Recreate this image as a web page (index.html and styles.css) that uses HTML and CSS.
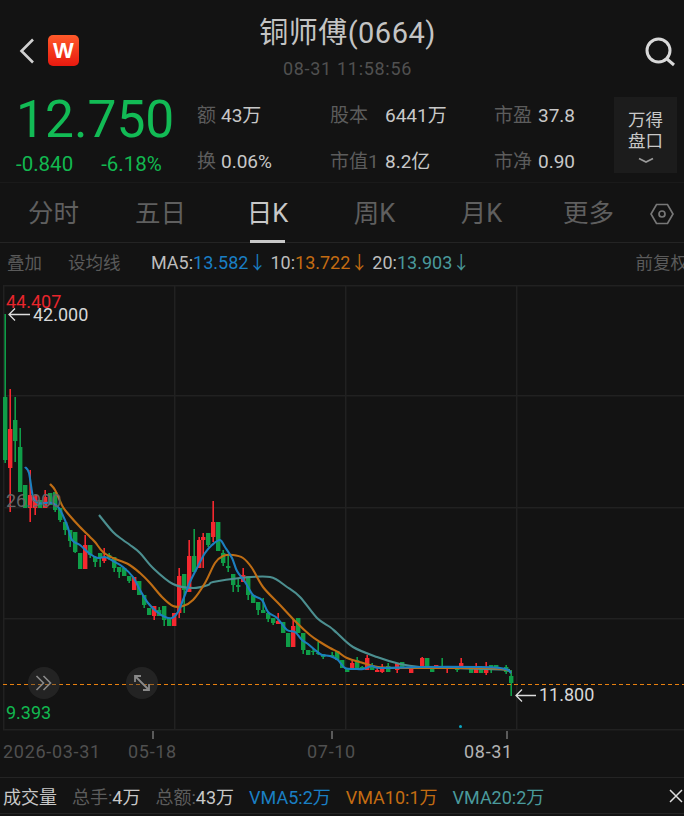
FILE: index.html
```html
<!DOCTYPE html>
<html lang="zh">
<head>
    <meta charset="UTF-8">
    <meta name="viewport" content="width=device-width, initial-scale=1.0">
    <title>铜师傅(0664)</title>
    <link rel="stylesheet" href="styles.css">
</head>
<body>
    <header class="topbar">
        <div class="topbar-left">
            <svg class="back-icon" width="16" height="26" viewBox="0 0 16 26"><path d="M14 1.5 2.5 13 14 24.5" fill="none" stroke="#d0d0d0" stroke-width="2.6"/></svg>
            <span class="logo">W</span>
        </div>
        <div class="title-block">
            <div class="title">铜师傅(0664)</div>
            <div class="time">08-31 11:58:56</div>
        </div>
        <div class="topbar-right">
            <svg width="32" height="30" viewBox="0 0 32 30"><circle cx="14.5" cy="13.5" r="11.5" fill="none" stroke="#d8d8d8" stroke-width="3"/><path d="M23 22l7 6" fill="none" stroke="#d8d8d8" stroke-width="3"/></svg>
        </div>
    </header>

    <section class="quote">
        <div class="price-block">
            <div class="price">12.750</div>
            <div class="change"><span>-0.840</span><span>-6.18%</span></div>
        </div>
        <div class="stats">
            <div class="stat stat-a"><span class="label">额</span><span class="value">43万</span></div>
            <div class="stat stat-b"><span class="label">股本</span><span class="value">6441万</span></div>
            <div class="stat stat-c"><span class="label">市盈</span><span class="value">37.8</span></div>
            <div class="stat stat-a"><span class="label">换</span><span class="value">0.06%</span></div>
            <div class="stat stat-b"><span class="label">市值1</span><span class="value">8.2亿</span></div>
            <div class="stat stat-c"><span class="label">市净</span><span class="value">0.90</span></div>
        </div>
        <div class="wande">
            <div>万得</div>
            <div>盘口</div>
            <svg width="16" height="7" viewBox="0 0 16 7"><path d="M1 1.5 8 5l7-3.5" fill="none" stroke="#9a9a9a" stroke-width="1.8"/></svg>
        </div>
    </section>

    <nav class="tabs">
        <div class="tab">分时</div>
        <div class="tab">五日</div>
        <div class="tab active">日K</div>
        <div class="tab">周K</div>
        <div class="tab">月K</div>
        <div class="tab">更多</div>
        <svg class="tab-icon" width="24" height="22" viewBox="0 0 24 22"><path d="M6.500 1.500h11L23 11l-5.500 9.500h-11L1 11z" fill="none" stroke="#777" stroke-width="1.700"/><circle cx="12" cy="11" r="3" fill="none" stroke="#777" stroke-width="1.700"/></svg>
    </nav>

    <div class="ma-row">
        <span class="tool tool-add">叠加</span>
        <span class="tool tool-set">设均线</span>
        <span class="ma-name">MA5:</span><span class="blue">13.582↓</span>
        <span class="ma-name ma-gap">10:</span><span class="orange">13.722↓</span>
        <span class="ma-name ma-gap">20:</span><span class="teal">13.903↓</span>
        <span class="tool tool-adjust">前复权</span>
    </div>

    <div class="chart">
        <svg id="kline" width="684" height="446" viewBox="0 285 684 446"></svg>
        <span class="tag tag-high">44.407</span>
        <span class="tag tag-max">42.000</span>
        <span class="tag tag-mid">26.900</span>
        <span class="tag tag-low">9.393</span>
        <span class="tag tag-min">11.800</span>
        <span class="round-btn btn-expand">
            <svg width="18" height="16" viewBox="0 0 18 16"><path d="M1.500 1 8.500 8 1.500 15M8.500 1l7 7-7 7" fill="none" stroke="#8a8a8a" stroke-width="1.600"/></svg>
        </span>
        <span class="round-btn btn-zoom">
            <svg width="18" height="18" viewBox="0 0 18 18"><path d="M2 8V2h6M2 2l14 14M16 10v6h-6" fill="none" stroke="#8a8a8a" stroke-width="1.800"/></svg>
        </span>
    </div>

    <div class="dates">
        <span class="tick tick-1"></span>
        <span class="tick tick-2"></span>
        <span class="tick tick-3"></span>
        <span class="date date-1">2026-03-31</span>
        <span class="date date-2">05-18</span>
        <span class="date date-3">07-10</span>
        <span class="date date-4">08-31</span>
    </div>

    <div class="volume">
        <span class="vol-title">成交量</span>
        <span class="vol-item"><span class="label">总手:</span>4万</span>
        <span class="vol-item"><span class="label">总额:</span>43万</span>
        <span class="blue">VMA5:2万</span>
        <span class="orange">VMA10:1万</span>
        <span class="teal">VMA20:2万</span>
        <svg class="vol-close" width="14" height="14" viewBox="0 0 14 14"><path d="M1 1l12 12M13 1 1 13" fill="none" stroke="#ddd" stroke-width="1.500"/></svg>
    </div>

    <script src="chart.js"></script>
</body>
</html>
```

FILE: styles.css
```css
* {
    box-sizing: border-box;
}
html, body {
    margin: 0;
    height: 816px;
    overflow: hidden;
}
body {
    width: 684px;
    background-color: #131313;
    color: #c8c8c8;
    font-family: Roboto, "Noto Sans CJK SC", sans-serif;
}

.topbar {
    display: grid;
    grid-template-columns: 1fr auto 1fr;
    height: 90px;
    padding: 15px 8px 0 19px;
}
.topbar-left {
    display: flex;
    align-items: flex-start;
    gap: 13px;
    padding-top: 20px;
}
.back-icon {
    margin-top: 3px;
}
.logo {
    width: 31px;
    height: 31px;
    border-radius: 5px;
    background: linear-gradient(#ff5a2a, #e8190f);
    color: #fff;
    font-family: "Liberation Sans", sans-serif;
    font-size: 22px;
    font-weight: bold;
    line-height: 31px;
    text-align: center;
}
.title-block {
    text-align: center;
}
.title {
    font-size: 29px;
    line-height: 36px;
    letter-spacing: 0.500px;
    color: #c4c4c4;
}
.time {
    margin-top: 6px;
    font-size: 18px;
    line-height: 24px;
    letter-spacing: 0.700px;
    color: #505050;
}
.topbar-right {
    display: flex;
    justify-content: flex-end;
    padding-top: 22px;
}

.quote {
    display: flex;
    height: 93px;
    padding: 0 7px 0 16px;
    border-bottom: 1px solid #1a1a1a;
}
.price-block {
    width: 181px;
}
.price {
    height: 60px;
    font-size: 51.500px;
    line-height: 60px;
    color: #12bb55;
}
.change {
    display: flex;
    gap: 28px;
    margin-top: 3px;
    font-size: 20.500px;
    line-height: 22px;
    color: #12b850;
}
.stats {
    display: grid;
    grid-template-columns: 133px 164px 120px;
    grid-auto-rows: 46px;
    width: 417px;
    padding-top: 3px;
}
.stat {
    display: flex;
    font-size: 19px;
    line-height: 46px;
}
.label {
    color: #5c5c5c;
}
.value {
    color: #c8c8c8;
}
.stat-a .label {
    width: 24px;
}
.stat-b .label {
    width: 55px;
}
.stat-c .label {
    width: 44px;
}
.wande {
    width: 63px;
    height: 76px;
    margin-top: 7px;
    padding-top: 13px;
    background-color: #1c1c1c;
    font-size: 17.500px;
    line-height: 21px;
    text-align: center;
}
.wande svg {
    display: block;
    margin: 5px auto 0;
}

.tabs {
    display: grid;
    grid-template-columns: repeat(6, 107px) 1fr;
    align-items: center;
    height: 60px;
    border-bottom: 1px solid #242424;
    font-size: 25.500px;
    color: #5f5f5f;
}
.tab {
    text-align: center;
    line-height: 60px;
    position: relative;
}
.tab.active {
    color: #c8c8c8;
}
.tab.active::after {
    content: "";
    position: absolute;
    left: 36px;
    right: 36px;
    bottom: 0;
    height: 3px;
    background-color: #c8c8c8;
}
.tab-icon {
    justify-self: center;
    margin-right: 3px;
    margin-top: 1px;
}

.ma-row {
    display: flex;
    height: 42px;
    padding-left: 7px;
    font-size: 18px;
    line-height: 40px;
    white-space: nowrap;
}
.tool {
    color: #5a5a5a;
    font-size: 17.500px;
}
.tool-add {
    width: 61px;
}
.tool-set {
    width: 83px;
}
.tool-adjust {
    margin-left: auto;
    margin-right: -4px;
}
.ma-name {
    color: #bdbdbd;
}
.ma-gap {
    margin-left: 4px;
}
.blue {
    color: #1a7fc4;
}
.orange {
    color: #c46c12;
}
.teal {
    color: #4a9a9c;
}

.chart {
    position: relative;
    height: 446px;
}
.chart svg {
    display: block;
}
.tag {
    position: absolute;
    font-size: 18px;
    line-height: 20px;
}
.tag-high {
    left: 6px;
    top: 7px;
    color: #e8252c;
}
.tag-max {
    left: 33px;
    top: 20px;
    color: #d8d8d8;
}
.tag-mid {
    left: 6px;
    top: 206px;
    color: #666;
}
.tag-low {
    left: 6px;
    top: 418px;
    color: #12b850;
}
.tag-min {
    left: 539px;
    top: 400px;
    color: #d8d8d8;
}
.round-btn {
    position: absolute;
    top: 382px;
    display: flex;
    align-items: center;
    justify-content: center;
    width: 32px;
    height: 32px;
    border-radius: 50%;
    background-color: rgba(60, 60, 60, 0.4);
}
.btn-expand {
    left: 28px;
}
.btn-zoom {
    left: 126px;
}

.dates {
    position: relative;
    height: 47px;
    border-bottom: 1px solid #242424;
    font-size: 18px;
    line-height: 42px;
    letter-spacing: 0.700px;
    color: #505050;
}
.date {
    position: absolute;
    top: 0;
}
.date-1 {
    left: 3px;
}
.date-2 {
    left: 128px;
}
.date-3 {
    left: 307px;
}
.date-4 {
    left: 464px;
    color: #b4b4b4;
}
.tick {
    position: absolute;
    top: 0;
    width: 2px;
    height: 8px;
    background-color: #5a5a5a;
}
.tick-1 {
    left: 152px;
}
.tick-2 {
    left: 331px;
}
.tick-3 {
    left: 506px;
}

.volume {
    display: flex;
    align-items: center;
    gap: 15px;
    height: 36px;
    padding-left: 3px;
    border-bottom: 1px solid #242424;
    font-size: 18px;
    white-space: nowrap;
}
.vol-title {
    color: #c8c8c8;
}
.vol-close {
    margin-left: auto;
    margin-right: 1px;
}
```

FILE: chart.js
```js
// k line data: left edge, wick top, body top, body bottom, wick bottom, colour
const candles = [
    [3, 314, 397, 460, 463, "g"], [8, 389, 429, 468, 512, "r"], [13, 397, 420, 441, 462, "g"],
    [18, 428, 447, 492, 492, "g"], [23, 485, 485, 508, 508, "g"], [28, 470, 495, 508, 522, "r"],
    [33, 495, 495, 508, 515, "r"], [38, 500, 500, 508, 508, "g"], [43, 490, 497, 508, 508, "r"],
    [48, 493, 493, 505, 505, "g"], [53, 492, 492, 510, 512, "g"], [58, 508, 508, 520, 522, "g"],
    [63, 522, 522, 530, 535, "g"], [68, 530, 530, 541, 547, "g"], [73, 532, 532, 552, 553, "g"],
    [78, 553, 553, 569, 569, "g"], [83, 535, 545, 569, 569, "r"], [88, 545, 545, 555, 558, "g"],
    [93, 556, 557, 562, 567, "g"], [98, 553, 553, 558, 567, "g"], [102, 548, 558, 561, 563, "r"],
    [107, 553, 555, 558, 560, "g"], [112, 557, 557, 568, 572, "g"], [117, 567, 567, 572, 578, "g"],
    [122, 568, 568, 576, 576, "g"], [127, 576, 576, 581, 583, "g"], [132, 577, 577, 590, 590, "r"],
    [137, 581, 581, 595, 595, "g"], [142, 595, 595, 605, 608, "g"], [147, 608, 608, 615, 615, "g"],
    [152, 606, 606, 616, 620, "r"], [157, 607, 610, 616, 616, "g"], [162, 606, 606, 620, 626, "g"],
    [167, 618, 618, 626, 626, "g"], [172, 613, 613, 626, 626, "r"], [177, 568, 576, 613, 618, "r"],
    [182, 574, 574, 590, 613, "g"], [187, 540, 556, 592, 592, "r"], [192, 529, 556, 572, 572, "g"],
    [197, 537, 540, 568, 568, "r"], [201, 533, 537, 540, 568, "r"], [206, 533, 533, 545, 547, "g"],
    [211, 501, 522, 537, 542, "r"], [216, 522, 522, 551, 551, "g"], [221, 550, 553, 563, 566, "g"],
    [226, 555, 566, 568, 572, "g"], [231, 574, 574, 585, 592, "g"], [236, 578, 585, 587, 592, "g"],
    [241, 568, 575, 582, 582, "r"], [246, 576, 576, 595, 600, "g"], [251, 595, 595, 603, 603, "g"],
    [256, 602, 602, 610, 615, "g"], [261, 598, 610, 613, 613, "g"], [266, 613, 613, 619, 622, "g"],
    [271, 618, 618, 623, 625, "g"], [276, 613, 621, 624, 624, "r"], [281, 622, 622, 633, 633, "g"],
    [286, 633, 633, 647, 647, "g"], [291, 619, 626, 647, 647, "r"], [296, 618, 618, 633, 633, "g"],
    [301, 633, 633, 650, 654, "g"], [306, 650, 650, 655, 655, "g"], [311, 648, 651, 652, 655, "g"],
    [316, 642, 653, 654, 655, "g"], [321, 654, 654, 657, 659, "g"], [330, 652, 655, 657, 657, "g"],
    [335, 651, 651, 660, 660, "g"], [340, 660, 660, 668, 668, "g"], [345, 668, 668, 672, 672, "g"],
    [350, 660, 663, 670, 670, "r"], [355, 657, 660, 669, 669, "g"], [360, 666, 667, 669, 670, "g"],
    [365, 655, 658, 670, 670, "r"], [370, 663, 665, 670, 670, "g"], [375, 667, 670, 672, 672, "r"],
    [380, 664, 668, 672, 673, "r"], [386, 663, 666, 672, 672, "g"], [395, 663, 663, 670, 673, "r"],
    [400, 662, 662, 668, 668, "g"], [409, 668, 668, 673, 673, "r"], [420, 657, 658, 666, 667, "r"],
    [425, 658, 658, 666, 666, "g"], [430, 667, 667, 672, 672, "g"], [434, 665, 665, 669, 669, "r"],
    [440, 658, 666, 667, 668, "g"], [445, 668, 668, 669, 673, "r"], [455, 668, 669, 670, 672, "g"],
    [459, 658, 663, 667, 668, "r"], [469, 668, 668, 673, 673, "g"], [474, 663, 667, 673, 673, "r"],
    [479, 667, 667, 673, 673, "g"], [484, 662, 667, 673, 675, "r"], [489, 665, 665, 668, 673, "g"],
    [494, 665, 665, 670, 670, "g"], [504, 665, 667, 672, 674, "g"], [509, 670, 676, 683, 696, "g"]
];

const ma5 = [[25, 467], [29, 473], [33, 497], [38, 503], [45, 503], [52, 503], [59, 508], [67, 525], [72, 540], [80, 545], [90, 554], [98, 558], [105, 557], [113, 561], [123, 567], [133, 577], [140, 590], [148, 603], [157, 612], [165, 617], [172, 618], [178, 612], [183, 600], [190, 582], [197, 568], [205, 553], [212, 545], [220, 540], [225, 547], [232, 558], [237, 571], [245, 582], [253, 595], [262, 600], [268, 612], [277, 618], [287, 630], [295, 632], [302, 640], [308, 644], [315, 650], [322, 655], [330, 656], [338, 660], [345, 668], [357, 669], [363, 669], [372, 666], [380, 668], [420, 667], [480, 667], [500, 668], [508, 670], [511, 673]];
const ma10 = [[50, 484], [55, 490], [63, 507], [70, 516], [80, 527], [90, 537], [95, 542], [103, 552], [113, 558], [128, 564], [140, 573], [150, 583], [162, 597], [173, 606], [183, 606], [193, 600], [205, 583], [215, 563], [223, 556], [233, 555], [243, 558], [252, 568], [263, 587], [280, 605], [297, 623], [310, 635], [320, 642], [330, 648], [338, 652], [347, 658], [363, 663], [378, 667], [397, 668], [420, 668], [453, 668], [487, 668], [507, 670], [511, 673]];
const ma20 = [[99, 515], [113, 532], [123, 540], [130, 545], [140, 553], [153, 568], [173, 584], [193, 588], [208, 585], [213, 582], [240, 578], [270, 577], [287, 587], [300, 597], [317, 618], [330, 627], [337, 633], [353, 647], [377, 657], [400, 664], [420, 667], [453, 668], [487, 669], [510, 670]];

const colours = { g: "#0f9d48", r: "#f5282f" };
let svg = "";

function rect(x, y, w, h, fill) {
    return `<rect x="${x}" y="${y}" width="${w}" height="${h}" fill="${fill}"/>`;
}

// smooth the moving average through its points
function line(points, stroke, width) {
    let d = `M${points[0][0]} ${points[0][1]}`;
    for (let i = 0; i < points.length - 1; i += 1) {
        let p0 = points[Math.max(i - 1, 0)];
        let p1 = points[i];
        let p2 = points[i + 1];
        let p3 = points[Math.min(i + 2, points.length - 1)];
        d += `C${p1[0] + (p2[0] - p0[0]) / 6} ${p1[1] + (p2[1] - p0[1]) / 6} ${p2[0] - (p3[0] - p1[0]) / 6} ${p2[1] - (p3[1] - p1[1]) / 6} ${p2[0]} ${p2[1]}`;
    }
    return `<path d="${d}" fill="none" stroke="${stroke}" stroke-width="${width}" stroke-linejoin="round"/>`;
}

// grid
[285, 395, 507, 618, 729].forEach(y => { svg += rect(3, y, 681, 1.5, "#212121"); });
[3, 174, 345, 516].forEach(x => { svg += rect(x, 285, 1.5, 445, "#212121"); });

// candles
candles.forEach(c => {
    svg += rect(c[0] + 1.4, c[1], 1.6, c[4] - c[1], colours[c[5]]);
    svg += rect(c[0], c[2], 4.4, c[3] - c[2], colours[c[5]]);
});

svg += line(ma20, "#4c8f90", 2.1);
svg += line(ma10, "#bf6d14", 2.1);
svg += line(ma5, "#1c7fbf", 2.1);

// last price
svg += `<line x1="3" y1="684.500" x2="684" y2="684.500" stroke="#e8800f" stroke-width="1" stroke-dasharray="4 3"/>`;

// price arrows
svg += `<path d="M30 314.500H9M15 308.500l-6 6 6 6" fill="none" stroke="#ddd" stroke-width="1.300"/>`;
svg += `<path d="M536 695.500H516M522 689.500l-6 6 6 6" fill="none" stroke="#ddd" stroke-width="1.300"/>`;

svg += `<circle cx="460.500" cy="726.500" r="1.500" fill="#0aa5c0"/>`;

document.getElementById("kline").innerHTML = svg;
```
